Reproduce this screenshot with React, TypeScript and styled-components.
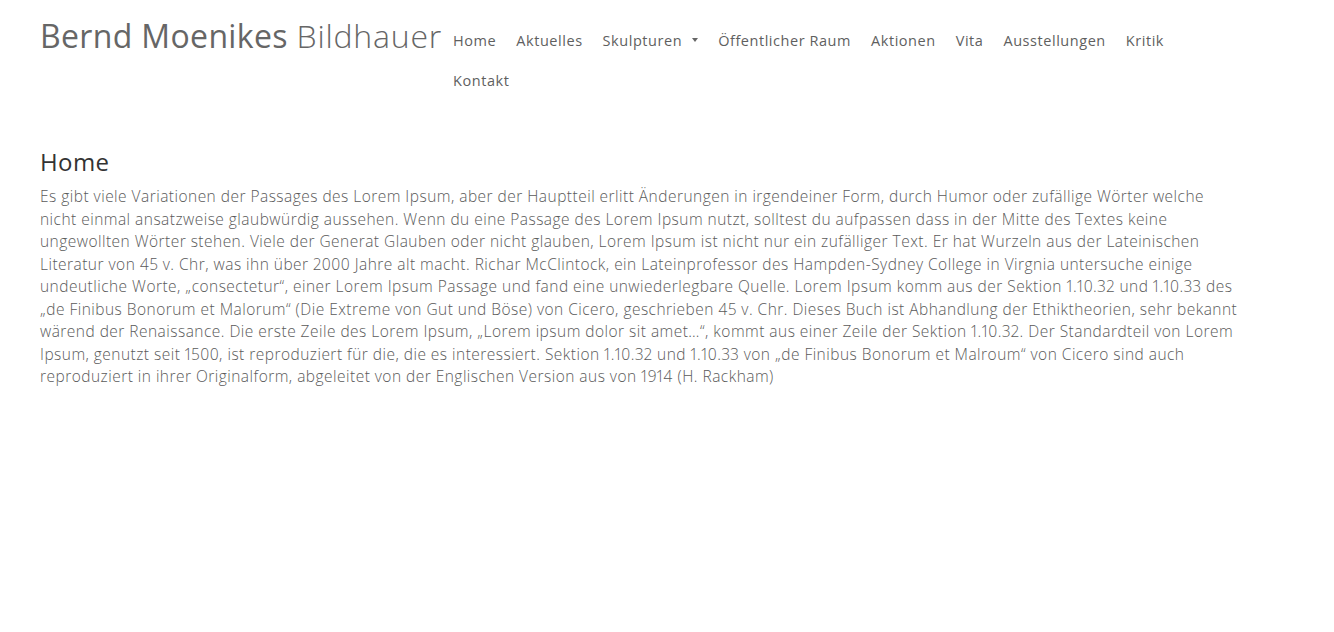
import styled, { createGlobalStyle } from 'styled-components';

const GlobalStyle = createGlobalStyle`
    html, body {
        margin: 0;
        padding: 0;
        background: #fff;
    }
    body {
        font-family: 'Open Sans', 'Noto Sans', sans-serif;
        color: #666;
    }
`;

const Page = styled.div`
    width: 1200px;
    padding: 0 40px;
`;

const Header = styled.header`
    display: flex;
    align-items: flex-start;
    padding-top: 16px;
`;

const Brand = styled.a`
    flex: none;
    margin-right: 11px;
    color: #666;
    font-size: 32px;
    line-height: 40px;
    letter-spacing: 0.35px;
    text-decoration: none;
    white-space: nowrap;
`;

const BrandName = styled.span`
    font-weight: 500;
`;

const BrandRole = styled.span`
    font-weight: 300;
    letter-spacing: 0.8px;
`;

const Nav = styled.nav`
    display: flex;
    flex-wrap: wrap;
    column-gap: 20px;
    max-width: 740px;
    padding-top: 4px;
`;

const NavItem = styled.a`
    display: flex;
    align-items: center;
    gap: 10px;
    height: 40px;
    color: #5f5f5f;
    font-size: 14.5px;
    font-weight: 500;
    letter-spacing: 0.55px;
    text-decoration: none;
`;

const Caret = styled.span`
    width: 0;
    height: 0;
    border-left: 3px solid transparent;
    border-right: 3px solid transparent;
    border-top: 4px solid #666;
`;

const Main = styled.main`
    padding-top: 47px;
`;

const Title = styled.h1`
    margin: 0 0 8px;
    color: #333;
    font-size: 24px;
    font-weight: 400;
    line-height: 30px;
    letter-spacing: 0.4px;
`;

const Text = styled.p`
    margin: 0;
    color: #5a5a5a;
    font-size: 15.5px;
    font-weight: 300;
    line-height: 22.5px;
    letter-spacing: 0.47px;
    font-variant-numeric: proportional-nums;
`;

const links = ['Home', 'Aktuelles', 'Skulpturen', 'Öffentlicher Raum', 'Aktionen', 'Vita', 'Ausstellungen', 'Kritik', 'Kontakt'];

const body =
    'Es gibt viele Variationen der Passages des Lorem Ipsum, aber der Hauptteil erlitt Änderungen in irgendeiner Form, durch Humor oder zufällige Wörter welche nicht einmal ansatzweise glaubwürdig aussehen. Wenn du eine Passage des Lorem Ipsum nutzt, solltest du aufpassen dass in der Mitte des Textes keine ungewollten Wörter stehen. Viele der Generat Glauben oder nicht glauben, Lorem Ipsum ist nicht nur ein zufälliger Text. Er hat Wurzeln aus der Lateinischen Literatur von 45 v. Chr, was ihn über 2000 Jahre alt macht. Richar McClintock, ein Lateinprofessor des Hampden-Sydney College in Virgnia untersuche einige undeutliche Worte, „consectetur“, einer Lorem Ipsum Passage und fand eine unwiederlegbare Quelle. Lorem Ipsum komm aus der Sektion 1.10.32 und 1.10.33 des „de Finibus Bonorum et Malorum“ (Die Extreme von Gut und Böse) von Cicero, geschrieben 45 v. Chr. Dieses Buch ist Abhandlung der Ethiktheorien, sehr bekannt wärend der Renaissance. Die erste Zeile des Lorem Ipsum, „Lorem ipsum dolor sit amet…“, kommt aus einer Zeile der Sektion 1.10.32. Der Standardteil von Lorem Ipsum, genutzt seit 1500, ist reproduziert für die, die es interessiert. Sektion 1.10.32 und 1.10.33 von „de Finibus Bonorum et Malroum“ von Cicero sind auch reproduziert in ihrer Originalform, abgeleitet von der Englischen Version aus von 1914 (H. Rackham)';

export default function App() {
    return (
        <>
            <GlobalStyle />
            <Page>
                <Header>
                    <Brand href="#">
                        <BrandName>Bernd Moenikes</BrandName> <BrandRole>Bildhauer</BrandRole>
                    </Brand>
                    <Nav>
                        {links.map((label) => (
                            <NavItem key={label} href="#">
                                {label}
                                {label === 'Skulpturen' && <Caret />}
                            </NavItem>
                        ))}
                    </Nav>
                </Header>
                <Main>
                    <Title>Home</Title>
                    <Text>{body}</Text>
                </Main>
            </Page>
        </>
    );
}
